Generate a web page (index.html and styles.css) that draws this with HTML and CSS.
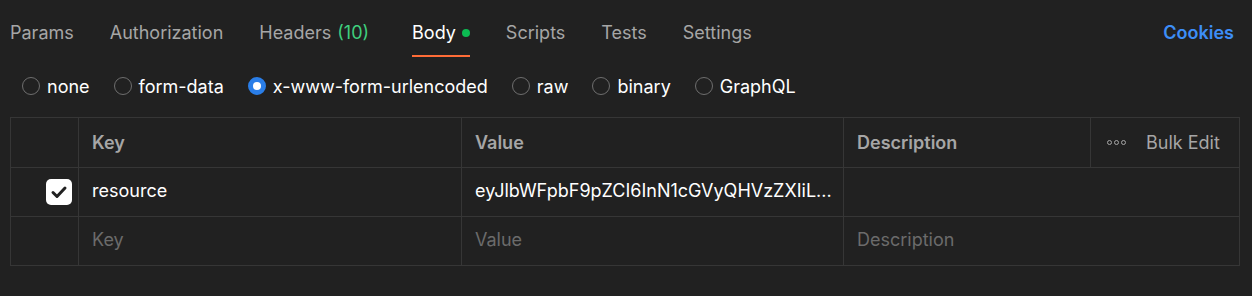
FILE: index.html
```html
<!DOCTYPE html>
<html lang="en">
<head>
    <meta charset="UTF-8">
    <title>Request Body</title>
    <link rel="stylesheet" href="styles.css">
</head>
<body>
    <div class="tabs">
        <div class="tab">Params</div>
        <div class="tab">Authorization</div>
        <div class="tab">Headers <span class="count">(10)</span></div>
        <div class="tab active">Body <span class="dot"></span></div>
        <div class="tab">Scripts</div>
        <div class="tab">Tests</div>
        <div class="tab">Settings</div>
        <div class="cookies">Cookies</div>
    </div>

    <div class="modes">
        <label class="mode"><span class="radio"></span>none</label>
        <label class="mode"><span class="radio"></span>form-data</label>
        <label class="mode"><span class="radio checked"></span>x-www-form-urlencoded</label>
        <label class="mode"><span class="radio"></span>raw</label>
        <label class="mode"><span class="radio"></span>binary</label>
        <label class="mode"><span class="radio"></span>GraphQL</label>
    </div>

    <div class="table">
        <div class="row head">
            <div class="cell check"></div>
            <div class="cell key">Key</div>
            <div class="cell value">Value</div>
            <div class="cell desc">Description</div>
            <div class="cell bulk">
                <span class="more"><i></i><i></i><i></i></span>
                <span>Bulk Edit</span>
            </div>
        </div>
        <div class="row">
            <div class="cell check">
                <span class="checkbox">
                    <svg width="20" height="20" viewBox="0 0 20 20"><path d="M4 10.5l4 4L16 6" fill="none" stroke="#212121" stroke-width="3" stroke-linecap="round" stroke-linejoin="round"/></svg>
                </span>
            </div>
            <div class="cell key">resource</div>
            <div class="cell value">eyJlbWFpbF9pZCI6InN1cGVyQHVzZXIiL...</div>
            <div class="cell desc wide"></div>
        </div>
        <div class="row last">
            <div class="cell check"></div>
            <div class="cell key placeholder">Key</div>
            <div class="cell value placeholder">Value</div>
            <div class="cell desc wide placeholder">Description</div>
        </div>
    </div>
</body>
</html>
```

FILE: styles.css
```css
body {
    margin: 0;
    background-color: #212121;
    font-family: Inter, "Noto Sans", sans-serif;
    color: #ffffff;
    font-size: 18px;
}
.tabs {
    display: flex;
    align-items: center;
    height: 57px;
    padding: 0 18px 0 10px;
}
.tab {
    position: relative;
    color: #a6a6a6;
    margin-right: 36px;
    height: 57px;
    box-sizing: border-box;
    padding-top: 8px;
    display: flex;
    align-items: center;
}
.tab.active {
    color: #ffffff;
}
.tab.active::after {
    content: "";
    position: absolute;
    left: 0;
    right: 0;
    bottom: 0;
    height: 2px;
    background: #ff6c37;
}
.count {
    color: #3fcf7e;
    margin-left: 6px;
    margin-right: 7px;
}
.dot {
    display: inline-block;
    width: 8px;
    height: 8px;
    border-radius: 50%;
    background: #0cbb52;
    margin-left: 6px;
}
.cookies {
    margin-left: auto;
    padding-top: 8px;
    color: #3d8ef7;
    font-weight: 600;
}
.modes {
    display: flex;
    align-items: center;
    height: 58px;
    padding-left: 22px;
}
.mode {
    display: flex;
    align-items: center;
    margin-right: 24px;
}
.radio {
    width: 18px;
    height: 18px;
    border: 1px solid #6e6e6e;
    border-radius: 50%;
    margin-right: 7px;
    box-sizing: border-box;
}
.radio.checked {
    border: 5px solid #2a7ee8;
    background: #ffffff;
}
.table {
    margin: 2px 12px 0 10px;
    border: 1px solid #363636;
}
.row {
    display: flex;
    height: 48px;
    border-bottom: 1px solid #363636;
}
.row.head {
    height: 49px;
}
.row.last {
    border-bottom: none;
}
.cell {
    display: flex;
    align-items: center;
    padding: 0 13px 3px;
    border-right: 1px solid #363636;
    box-sizing: border-box;
}
.head .cell {
    padding-bottom: 0;
}
.check {
    width: 68px;
    justify-content: flex-end;
    padding: 0 6px;
}
.key {
    width: 383px;
}
.value {
    width: 382px;
}
.desc {
    width: 247px;
}
.desc.wide {
    flex: 1;
    border-right: none;
}
.bulk {
    flex: 1;
    border-right: none;
    padding-left: 16px;
    color: #a6a6a6;
}
.head .cell {
    color: #a6a6a6;
    font-weight: 600;
}
.head .bulk {
    font-weight: 400;
}
.more {
    display: flex;
    gap: 2px;
    margin-right: 20px;
}
.more i {
    width: 5px;
    height: 5px;
    border: 1px solid #a6a6a6;
    border-radius: 50%;
    box-sizing: border-box;
}
.checkbox {
    width: 26px;
    height: 26px;
    border-radius: 5px;
    background: #ffffff;
    display: flex;
    align-items: center;
    justify-content: center;
}
.placeholder {
    color: #6b6b6b;
}
```
